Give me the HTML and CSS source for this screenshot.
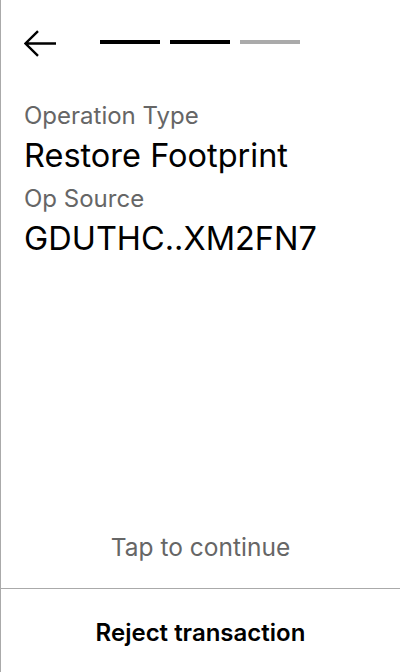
FILE: index.html
```html
<!DOCTYPE html>
<html>
<head>
<meta charset="utf-8">
<link rel="stylesheet" href="styles.css">
</head>
<body>
<div class="screen">
  <div class="header">
    <svg class="back" width="32" height="28" viewBox="0 0 32 28">
      <path d="M14 1.2 L1.5 13.5 L14 25.8 M1.5 13.5 H32" fill="none" stroke="#000" stroke-width="2.4"/>
    </svg>
    <div class="steps">
      <span class="step done"></span>
      <span class="step done"></span>
      <span class="step"></span>
    </div>
  </div>
  <div class="content">
    <div class="label">Operation Type</div>
    <div class="value">Restore Footprint</div>
    <div class="label">Op Source</div>
    <div class="value">GDUTHC..XM2FN7</div>
  </div>
  <div class="tap">Tap to continue</div>
  <div class="footer">Reject transaction</div>
</div>
</body>
</html>
```
FILE: styles.css
```css
html, body { margin: 0; padding: 0; background: #fff; }
body { font-family: Inter, "Noto Sans", sans-serif; color: #000; }
.screen {
  box-sizing: border-box;
  width: 400px; height: 672px;
  border-left: 1px solid #aaa;
  display: flex; flex-direction: column;
}
.header {
  display: flex; align-items: flex-start;
  padding: 30px 0 0 23px;
  height: 28px;
}
.back { display: block; }
.steps { display: flex; gap: 10px; margin: 10px 0 0 44px; }
.step { width: 60px; height: 4px; background: #aaa; }
.step.done { background: #000; }
.content {
  padding: 40px 23px 0;
  display: flex; flex-direction: column;
}
.label { font-size: 24px; line-height: 36px; color: #666; }
.value { font-size: 32.5px; line-height: 44px; }
.value + .label { margin-top: 3px; }
.tap {
  margin-top: auto;
  text-align: center; font-size: 24.5px; line-height: 29px; color: #666;
  margin-bottom: 26px;
}
.footer {
  border-top: 1px solid #aaa;
  height: 84px;
  box-sizing: border-box;
  padding-top: 29px;
  text-align: center;
  font-size: 24px; line-height: 29px; font-weight: 600;
}
```
